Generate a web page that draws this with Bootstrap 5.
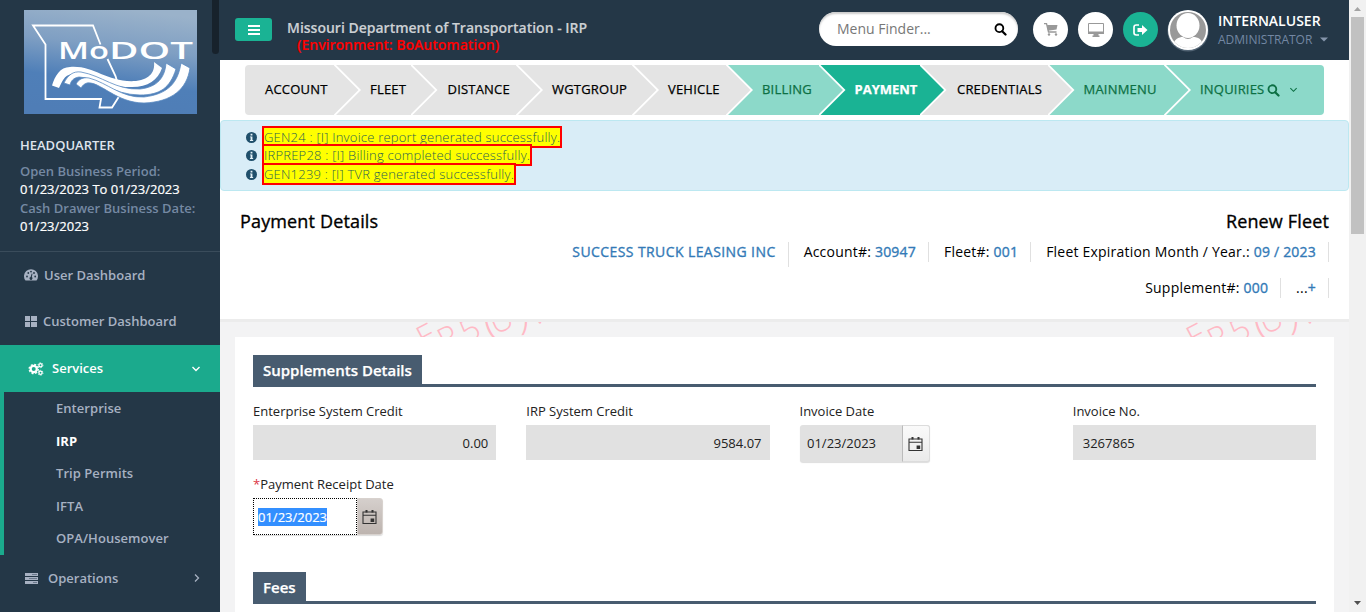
<!DOCTYPE html>
<html lang="en">
<head>
<meta charset="utf-8">
<meta name="viewport" content="width=device-width, initial-scale=1">
<title>Payment Details</title>
<link href="https://cdn.jsdelivr.net/npm/bootstrap@5.3.0/dist/css/bootstrap.min.css" rel="stylesheet">
<style>
body{font-family:"Open Sans","Noto Sans",sans-serif;font-size:13px;line-height:18.57px;color:#222;background:#f3f3f4;height:612px;overflow:hidden}
svg{display:block;flex:none}
.side{width:220px;height:612px;background:#243747;color:#a7b1c2;font-weight:600}
.side-thumb{right:1px;top:-6px;width:7px;height:60px;border-radius:4px;background:#17222c}
.logo{margin:10px 0 0 24px}
.hq{padding:22px 0 0 20px;height:138px;border-bottom:1px solid #3a4c5b;color:#dfe4ed}
.hq .muted2{color:#7589a3}
.hq .val{color:#fff;font-weight:500;-webkit-text-stroke:.2px;position:relative;top:-1px}
.side-link{height:46.5px;padding-left:24px}
.side-link.on{height:47px;background:#1baa8d;color:#fff;padding-left:28px}
.side-sub{border-left:4px solid #1baa8d;height:163px;padding:0 0 0 52px;letter-spacing:.05px}
.side-sub div{height:32.5px;line-height:32.5px}
.main{width:1129px;height:612px}
.topbar{height:60px;background:#243747}
.burger{width:37px;height:23px;margin:18px 0 0 15px;border-radius:3px;background:#1ab394}
.app-title{margin:18px 0 0 15px;font-size:14px;font-weight:600;color:#ccd0d4;line-height:20px;-webkit-text-stroke:.15px}
.app-title .env{color:#f00;line-height:13px;padding-left:10px}
.finder{width:199px;height:34px;border-radius:17px;background:#fff;color:#777;font-size:14px;padding:0 11px 0 18px;box-shadow:inset 0 2px 2px #ccc;margin-top:12px}
.disc{width:35px;height:35px;border-radius:50%;background:#fff;margin:12px 0 0 10px}
.disc.go{background:#1ab394}
.user{width:182px;margin:10px 0 0 9px;color:#fff;line-height:19px}
.steps{height:50px;width:1079px;margin:5px 0 5px 25px;font-weight:500;color:#000;letter-spacing:.2px;-webkit-text-stroke:.25px}
.step{position:relative;height:50px;line-height:49px;padding-left:36px;background:#e4e4e4;--c:#e4e4e4;white-space:nowrap}
.step::before,.step::after{content:"";position:absolute;left:100%;top:0;width:25px;height:50px;background:#fff;clip-path:polygon(0 0,100% 50%,0 100%)}
.step::before{width:27px;clip-path:polygon(0 0,2px 0,100% 50%,2px 100%,0 100%)}
.step::after{background:var(--c);left:calc(100% - .5px)}
.step:last-child::before,.step:last-child::after{display:none}
.step.soft{background:#8cd9c9;--c:#8cd9c9;color:#0d7044}
.step.now{background:#1ab394;--c:#1ab394;color:#fff;font-weight:700;letter-spacing:0}
.step:nth-child(1){width:89px;z-index:10;padding-left:20px;border-radius:4px 0 0 4px}
.step:nth-child(2){width:76.5px;z-index:9}
.step:nth-child(3){width:105.5px;z-index:8;padding-left:37px}
.step:nth-child(4){width:116px;z-index:7}
.step:nth-child(5){width:94px;z-index:6}
.step:nth-child(6){width:92.5px;z-index:5}
.step:nth-child(7){width:101px;z-index:4}
.step:nth-child(8){width:128px;z-index:3;padding-left:37.5px}
.step:nth-child(9){width:116.500px;z-index:2}
.step:nth-child(10){width:160px;z-index:1;border-radius:0 4px 4px 0}
.notes{height:71px;background:#d9edf7;border:1px solid #bce8f1;border-radius:4px;padding:6.600px 0 0 25px;color:#31708f}
.notes span{border:2px solid red;background:#ff0;color:#2d5f50;font-weight:300;margin-left:5px;white-space:nowrap;letter-spacing:.22px}
.notes svg{display:inline-block;vertical-align:-1px}
.pagehead{height:131px;background:#fff;border-bottom:3px solid #ececec;padding:0 20px;color:#000}
.pagehead h1{font-size:18px;font-weight:500;line-height:24px;margin:18px 0 0;letter-spacing:.15px;-webkit-text-stroke:.35px}
.facts{font-size:14px;line-height:20px;letter-spacing:.21px}
.facts div{border-right:1px solid #e0e0e0;height:20px;padding:0 12px 0 15px;white-space:nowrap}
.facts b{font-weight:500;color:#337ab7;-webkit-text-stroke:.35px}
.panel{margin:0 15px;height:275px;background:#fff;padding:18px 18px 0}
.sect{height:32px;border-bottom:3px solid #485c70}
.sect span{display:inline-block;height:32px;line-height:30px;background:#485c70;color:#fff;font-size:15px;font-weight:600;padding:0 10px;-webkit-text-stroke:.25px}
.fields{--bs-gutter-x:30px}
.fields label{display:block;height:19px;margin-bottom:4px;white-space:nowrap}
.ro{height:35px;background:#e1e1e1;line-height:36px;padding:0 8px 0 10px}
.date-box{width:130px;height:37px;border-radius:3px;background:#e1e1e1;box-shadow:0 1px 1px #ddd}
.date-box .txt{width:102px;padding-left:7.500px;line-height:37px}
.date-box .cal{width:28px;border:1px solid #dcdcdc;border-left-color:#bbb;border-radius:0 3px 3px 0;background:linear-gradient(#fafafa,#eaeaea)}
.date-box.hot{background:#fff}
.date-box.hot .txt{width:104px;border:1px dotted #000;padding-left:4px;line-height:36px}
.date-box.hot .cal{width:26px;border-color:#d8d2ce;background:linear-gradient(#d5cfcc,#bdb4af)}
.picked{background:#338fff;color:#fff;font-weight:500;-webkit-text-stroke:.2px}
.pagebar{width:17px;height:612px;background:#f1f1f1}
.pagebar i{width:13px;height:217px;background:#c1c1c1}
</style>
</head>
<body>
<svg width="0" height="0" class="position-absolute">
<defs>
<symbol id="info" viewBox="0 0 12 12"><circle cx="6" cy="6" r="6" fill="#1f4f6b"/><path d="M5 2h2v1.800H5zM4.300 4.800H7v4h.8v1H4.300v-1H5V5.800h-.7z" fill="#e4f2f8"/></symbol>
<symbol id="cal" viewBox="0 0 16 16"><path d="M1 3h13v11.500H1zM1 6.200h13" fill="none" stroke="#333" stroke-width="1.100"/><path d="M3.500 1h2v2.500h-2zM9.500 1h2v2.500h-2zM8.600 9.400h3.600v3.600H8.600z" fill="#333"/></symbol>
<symbol id="search" viewBox="0 0 14 14"><circle cx="5.800" cy="5.600" r="4.200" fill="none" stroke="currentColor" stroke-width="2"/><path d="M8.800 8.800l3.600 3.600" stroke="currentColor" stroke-width="2.400" stroke-linecap="round"/></symbol>
</defs>
</svg>
<div class="d-flex">
<aside class="side position-relative overflow-hidden">
  <div class="side-thumb position-absolute"></div>
  <svg class="logo" width="173" height="104" viewBox="0 0 173 104">
    <defs><linearGradient id="sky" x1="0.6" y1="0" x2="0.4" y2="1"><stop offset="0" stop-color="#9ab2ca"/><stop offset=".35" stop-color="#7f9fc3"/><stop offset=".68" stop-color="#4f7fb8"/><stop offset="1" stop-color="#4f7db6"/></linearGradient></defs>
    <rect width="173" height="104" fill="url(#sky)"/>
    <path d="M76.500 34.500L69 15.500H9L21.500 34.500V89H77L75.500 97.500H88L95 86.500C98 80 94 76 91.500 66L83.500 49" fill="none" stroke="#fff" stroke-width="1.800"/>
    <g fill="#fff" font-family="Open Sans" font-size="24" font-weight="600"><text x="34" y="49" textLength="31" lengthAdjust="spacingAndGlyphs">M</text><text x="65" y="49" font-size="23" textLength="20" lengthAdjust="spacingAndGlyphs">o</text><text x="85" y="49" textLength="84" lengthAdjust="spacingAndGlyphs">DOT</text></g>
    <path d="M28 75.500C31 66 36 57 46 57C70 55 83 73 112 71C127 69 131 61 130 52L138 58C134 70 124 77 108 77C84 78 67 63 48 64C40 65 38 72 35 78Z" fill="#fff"/>
    <path d="M40 73C44 65 49 61 57 62C79 66 91 80 116 79C134 77 141 67 142 53L152 59C146 78 136 85 116 85C88 85 72 67 55 67C49 68 47 71 46 75Z" fill="#fff" stroke="#5c8bc1" stroke-width=".8"/>
    <path d="M52 74C55 69 59 67 65 68C84 73 97 88 120 87C145 84 154 72 157 53L166 58C163 79 148 92 120 93C92 93 76 71 63 73C60 74 59 75 57 78Z" fill="#fff" stroke="#5c8bc1" stroke-width=".8"/>
  </svg>
  <div class="hq">
    <div style="height:26px">HEADQUARTER</div>
    <div class="muted2">Open Business Period:</div>
    <div class="val">01/23/2023 To 01/23/2023</div>
    <div class="muted2">Cash Drawer Business Date:</div>
    <div class="val">01/23/2023</div>
  </div>
  <div class="side-link d-flex align-items-center"><svg width="14" height="12" viewBox="0 0 14 12" class="me-1"><path d="M1.500 11.500A7 7 0 1 1 12.500 11.500Z" fill="#a7b1c2"/><g fill="#243747"><circle cx="3" cy="7.500" r=".9"/><circle cx="4.300" cy="4" r=".9"/><circle cx="7" cy="2.600" r=".9"/><circle cx="10" cy="4" r=".9"/><circle cx="11.200" cy="7.500" r=".9"/><path d="M7.700 4.500l.8.300-.7 3.300a1.500 1.500 0 1 1-1.200-.2z"/></g></svg><span style="margin-left:2px">User Dashboard</span></div>
  <div class="side-link d-flex align-items-center"><svg width="13" height="11" viewBox="0 0 13 11" fill="#a7b1c2"><path d="M1 0h5v5H1zM7 0h6v5H7zM1 6h5v5H1zM7 6h6v5H7z"/></svg><span style="margin-left:6px">Customer Dashboard</span></div>
  <div class="side-link on d-flex align-items-center"><svg width="16" height="14" viewBox="0 0 16 14" fill="none" stroke="#fff"><circle cx="5.700" cy="7" r="3.100" stroke-width="2.200"/><circle cx="5.700" cy="7" r="4.600" stroke-width="1.300" stroke-dasharray="2 1.610"/><circle cx="12.500" cy="3.200" r="1.600" stroke-width="1.300"/><circle cx="12.500" cy="3.200" r="2.500" stroke-width=".8" stroke-dasharray="1.300 1.300"/><circle cx="12.500" cy="10.800" r="1.600" stroke-width="1.300"/><circle cx="12.500" cy="10.800" r="2.500" stroke-width=".8" stroke-dasharray="1.300 1.300"/></svg><span style="margin-left:8px">Services</span><svg class="ms-auto" style="margin-right:19px" width="10" height="8" viewBox="0 0 10 8"><path d="M1.500 2L5 5.500 8.500 2" fill="none" stroke="#fff" stroke-width="1.400"/></svg></div>
  <div class="side-sub"><div>Enterprise</div><div class="text-white fw-bold">IRP</div><div>Trip Permits</div><div>IFTA</div><div>OPA/Housemover</div></div>
  <div class="side-link d-flex align-items-center"><svg width="14" height="11" viewBox="0 0 14 11"><path d="M1 0h13v3H1zM1 4h13v3H1zM1 8h13v3H1z" fill="#a7b1c2"/><path d="M8 1.500h5M5 5.500h8M9 9.500h4" stroke="#5c6b7e" stroke-width=".8"/></svg><span style="margin-left:10px">Operations</span><svg class="ms-auto" style="margin-right:19px" width="8" height="10" viewBox="0 0 8 10"><path d="M2 1.500L5.500 5 2 8.500" fill="none" stroke="#a7b1c2" stroke-width="1.300"/></svg></div>
</aside>

<main class="main">
  <header class="topbar d-flex align-items-start">
    <div class="burger d-flex align-items-center justify-content-center"><svg width="12" height="10" viewBox="0 0 12 10" fill="#fff"><path d="M0 0h12v2H0zM0 4h12v2H0zM0 8h12v2H0z"/></svg></div>
    <div class="app-title"><div>Missouri Department of Transportation - IRP</div><div class="env">(Environment: BoAutomation)</div></div>
    <div class="finder d-flex align-items-center justify-content-between ms-auto"><span>Menu Finder...</span><svg width="13" height="13" color="#000"><use href="#search"/></svg></div>
    <div class="disc d-flex align-items-center justify-content-center" style="margin-left:15px"><svg width="14" height="13" viewBox="0 0 14 13"><path d="M0 .5h2.500L4.500 9h8" fill="none" stroke="#999" stroke-width="1.300"/><path d="M3 2h10.500L12.500 6.500 4 7.700z" fill="#999"/><circle cx="5" cy="11.500" r="1.200" fill="#999"/><circle cx="12" cy="11.500" r="1.200" fill="#999"/></svg></div>
    <div class="disc d-flex align-items-center justify-content-center"><svg width="16" height="14" viewBox="0 0 16 14"><path d="M.5.500h15v9.500H.5z" fill="#fff" stroke="#999"/><path d="M0 8.500h16V11h-5.500v1.500h1V14h-7v-1.500h1V11H0z" fill="#999"/></svg></div>
    <div class="disc go d-flex align-items-center justify-content-center"><svg width="15" height="12" viewBox="0 0 15 12"><path d="M6 1H3.200Q1 1 1 3.200v5.600Q1 11 3.200 11H6" fill="none" stroke="#fff" stroke-width="1.700"/><path d="M4.500 4H9V1l5.500 5L9 11V8H4.500z" fill="#fff"/></svg></div>
    <div class="user d-flex">
      <svg width="42" height="46" viewBox="0 0 42 46" style="margin-top:-1px"><defs><clipPath id="face"><circle cx="21" cy="21" r="18"/></clipPath></defs><circle cx="21" cy="22" r="20.600" fill="#8c9baa" opacity=".45"/><circle cx="21" cy="21" r="20" fill="#fff"/><circle cx="21" cy="21" r="18" fill="#999"/><g clip-path="url(#face)" fill="#fff"><ellipse cx="21" cy="16.500" rx="11.500" ry="12.500"/><path d="M5 40C6 30 12 28 16 28Q21 32 26 28C31 28 36 30 37 40Z"/></g></svg>
      <div style="margin-left:9px"><div style="font-size:14px;font-weight:600;padding-top:1px">INTERNALUSER</div><div class="d-flex align-items-center" style="color:#7387a3;font-size:12px">ADMINISTRATOR<svg width="8" height="5" class="ms-2" viewBox="0 0 8 5"><path d="M0 .5h8L4 4.500z" fill="#8595ab"/></svg></div></div>
    </div>
  </header>
  <div class="bg-white overflow-hidden">
  <nav class="steps d-flex">
    <div class="step">ACCOUNT</div><div class="step">FLEET</div><div class="step">DISTANCE</div><div class="step">WGTGROUP</div><div class="step">VEHICLE</div><div class="step soft">BILLING</div><div class="step now">PAYMENT</div><div class="step">CREDENTIALS</div><div class="step soft">MAINMENU</div>
    <div class="step soft d-flex align-items-center"><span style="height:50px">INQUIRIES</span><svg width="13" height="13" style="margin-left:3px"><use href="#search"/></svg><svg width="9" height="8" viewBox="0 0 10 8" style="margin-left:9px"><path d="M1.500 2L5 5.500 8.500 2" fill="none" stroke="currentColor" stroke-width="1.200"/></svg></div>
  </nav>
  <div class="notes">
    <div><svg width="11" height="11"><use href="#info"/></svg><span>GEN24 : [I] Invoice report generated successfully.</span></div>
    <div><svg width="11" height="11"><use href="#info"/></svg><span>IRPREP28 : [I] Billing completed successfully.</span></div>
    <div><svg width="11" height="11"><use href="#info"/></svg><span>GEN1239 : [I] TVR generated successfully.</span></div>
  </div>
  <section class="pagehead">
    <div class="d-flex justify-content-between"><h1>Payment Details</h1><h1>Renew Fleet</h1></div>
    <div class="facts d-flex justify-content-end" style="margin-top:9px"><div style="height:25px;letter-spacing:.41px"><b>SUCCESS TRUCK LEASING INC</b></div><div>Account#: <b>30947</b></div><div>Fleet#: <b>001</b></div><div>Fleet Expiration Month / Year.: <b>09 / 2023</b></div></div>
    <div class="facts d-flex justify-content-end" style="margin-top:11px"><div>Supplement#: <b>000</b></div><div>...<b>+</b></div></div>
  </section>
  </div>
  <svg width="1129" height="15" viewBox="0 0 1129 15">
    <defs><g id="wm" fill="#ffb9c5" font-family="Open Sans" font-weight="300" font-size="32"><text transform="translate(204 28) rotate(-28)">E</text><text transform="translate(225 30) rotate(-28)">P</text><text transform="translate(247 22) rotate(-28)">5</text><text transform="translate(270 18) rotate(-22)" font-size="42">(</text><text transform="translate(275 13) rotate(-24)">U</text><text transform="translate(299 7) rotate(-10)" font-size="42">)</text><text transform="translate(317 3) rotate(-28)">.</text></g></defs>
    <use href="#wm"/><use href="#wm" x="770"/>
  </svg>
  <section class="panel">
    <div class="sect"><span>Supplements Details</span></div>
    <div class="row fields" style="margin-top:15px">
      <div class="col-3"><label>Enterprise System Credit</label><div class="ro text-end">0.00</div></div>
      <div class="col-3"><label>IRP System Credit</label><div class="ro text-end">9584.07</div></div>
      <div class="col-3"><label>Invoice Date</label><div class="date-box d-flex"><div class="txt">01/23/2023</div><div class="cal d-flex align-items-center justify-content-center"><svg width="16" height="16"><use href="#cal"/></svg></div></div></div>
      <div class="col-3"><label>Invoice No.</label><div class="ro">3267865</div></div>
      <div class="col-3" style="margin-top:13px"><label><span class="text-danger">*</span>Payment Receipt Date</label><div class="date-box hot d-flex"><div class="txt"><span class="picked">01/23/2023</span></div><div class="cal d-flex align-items-center justify-content-center"><svg width="16" height="16"><use href="#cal"/></svg></div></div></div>
    </div>
    <div class="sect" style="margin-top:37px"><span>Fees</span></div>
  </section>
</main>
<div class="pagebar d-flex flex-column align-items-center justify-content-between">
  <div><svg width="13" height="17" viewBox="0 0 13 17"><path d="M3 11h7L6.500 7z" fill="#a3a3a3"/></svg><i class="d-block"></i></div>
  <svg width="13" height="17" viewBox="0 0 13 17"><path d="M3 6h7L6.500 10z" fill="#505050"/></svg>
</div>
</div>
<script src="https://cdn.jsdelivr.net/npm/bootstrap@5.3.0/dist/js/bootstrap.bundle.min.js"></script>
</body>
</html>
